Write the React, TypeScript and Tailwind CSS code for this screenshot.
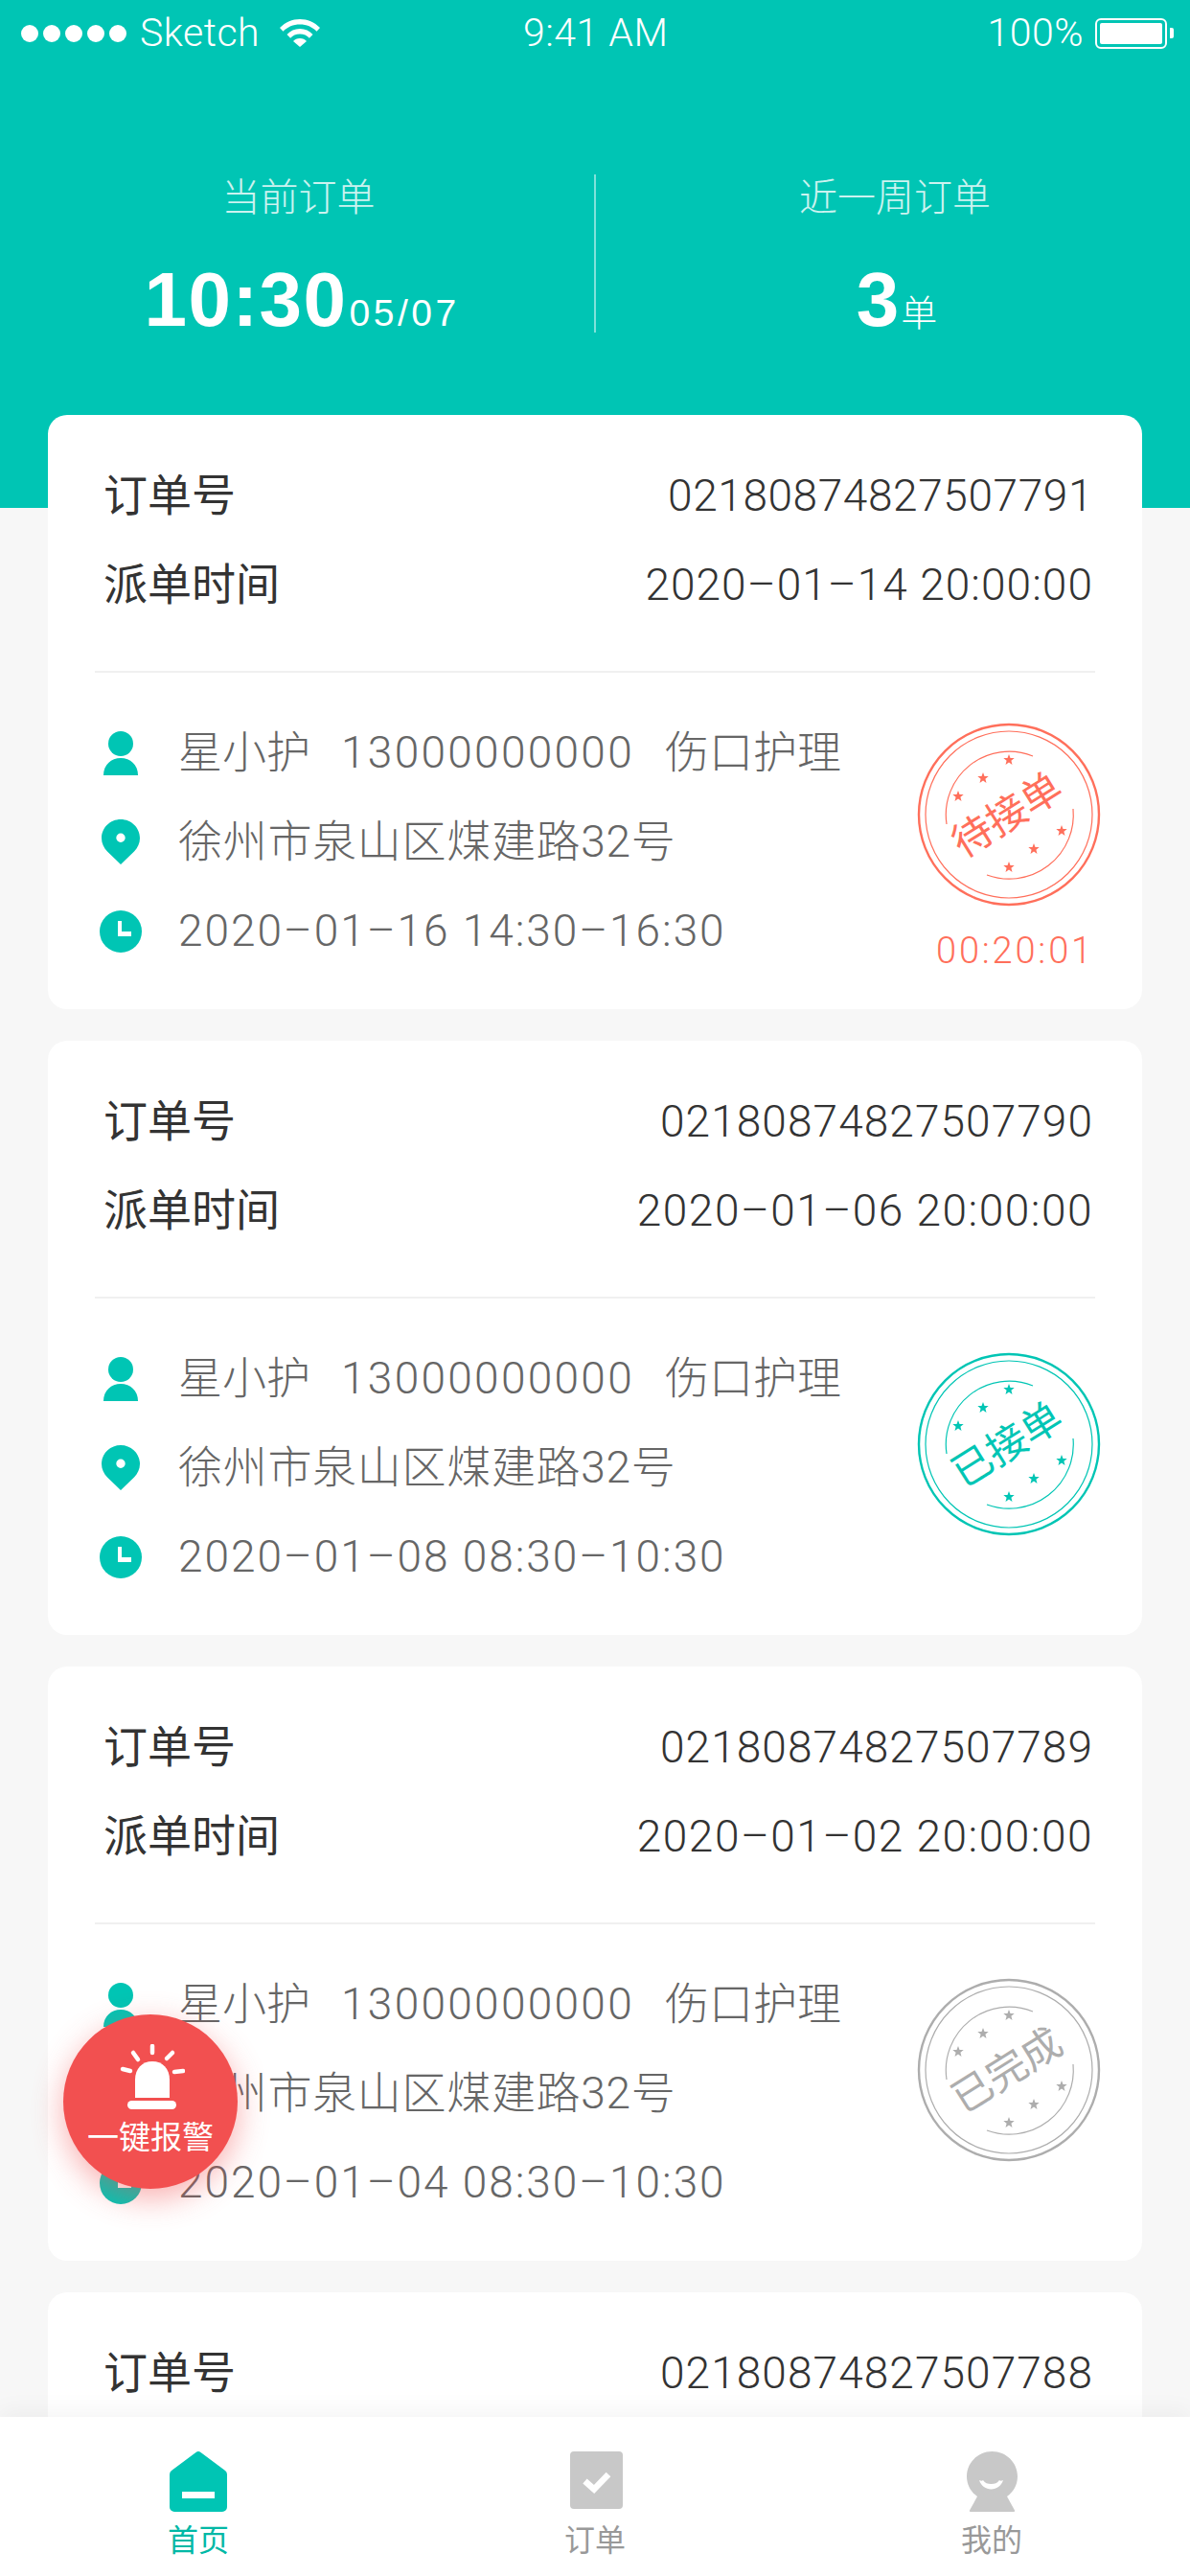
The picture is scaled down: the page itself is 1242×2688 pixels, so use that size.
type Stamp = "pending" | "accepted" | "done";

type Order = {
  no: string;
  sent?: string;
  slot?: string;
  stamp?: Stamp;
  timer?: string;
};

const orders: Order[] = [
  { no: "021808748275 07791", sent: "2020–01–14 20:00:00", slot: "2020–01–16 14:30–16:30", stamp: "pending", timer: "00:20:01" },
  { no: "021808748275 07790", sent: "2020–01–06 20:00:00", slot: "2020–01–08 08:30–10:30", stamp: "accepted" },
  { no: "021808748275 07789", sent: "2020–01–02 20:00:00", slot: "2020–01–04 08:30–10:30", stamp: "done" },
  { no: "021808748275 07788" },
].map((o) => ({ ...o, no: o.no.replace(" ", "") })) as Order[];

const stamps = {
  pending: { color: "#FF6F5B", label: "待接单" },
  accepted: { color: "#00C5B4", label: "已接单" },
  done: { color: "#ADADAD", label: "已完成" },
};

const starPoints = "0,-6 1.500,-1.900 5.700,-1.900 2.400,0.700 3.500,4.900 0,2.400 -3.500,4.900 -2.400,0.700 -5.700,-1.900 -1.500,-1.900";
const starSpots = [
  [0, -57],
  [-27, -38],
  [-53, -19],
  [55, 17],
  [26, 36],
  [0, 55],
];

function StampMark({ kind }: { kind: Stamp }) {
  const { color, label } = stamps[kind];
  return (
    <svg width="200" height="200" viewBox="-100 -100 200 200" fill="none" stroke={color}>
      <circle r="94" strokeWidth="2.4" />
      <circle r="87" strokeWidth="1.2" />
      <path d="M-65 10A66 66 0 0 1 25-61" strokeWidth="1.2" />
      <path d="M67-6A67 67 0 0 1-23 63" strokeWidth="1.2" />
      {starSpots.map(([x, y]) => (
        <polygon key={`${x}${y}`} points={starPoints} transform={`translate(${x} ${y})`} fill={color} stroke="none" />
      ))}
      <text
        x="0"
        y="0"
        transform="rotate(-32) translate(-2 14)"
        textAnchor="middle"
        fill={color}
        stroke="none"
        fontSize="42"
        fontFamily="'Noto Sans CJK SC', sans-serif"
      >
        {label}
      </text>
    </svg>
  );
}

function PersonIcon() {
  return (
    <svg width="36" height="46" viewBox="0 0 36 46" fill="#00C5B4">
      <circle cx="18" cy="13" r="13" />
      <path d="M0 46C0 35 8 28 18 28s18 7 18 18z" />
    </svg>
  );
}

function PinIcon() {
  return (
    <svg width="40" height="47" viewBox="0 0 40 47" fill="#00C5B4">
      <path
        fillRule="evenodd"
        d="M20 0c11 0 20 8.700 20 19.500 0 5.500-2.300 10-6 14L20 47 6 33.500C2.300 29.500 0 25 0 19.500 0 8.700 9 0 20 0zm0 14.500a4.700 4.700 0 1 0 0 9.400 4.700 4.700 0 0 0 0-9.400z"
      />
    </svg>
  );
}

function ClockIcon() {
  return (
    <svg width="44" height="44" viewBox="0 0 44 44">
      <circle cx="22" cy="22" r="22" fill="#00C5B4" />
      <path d="M19 11h4v11h10v5H19z" fill="#fff" />
    </svg>
  );
}

function OrderCard({ order }: { order: Order }) {
  return (
    <div className="h-[620px] shrink-0 rounded-[20px] bg-white">
      <div className="pl-[58px] pr-[51px] pt-[38px] text-[46px] leading-[93px] text-[#333]">
        <div className="flex justify-between">
          <span>订单号</span>
          <span className={order.timer ? "font-light tracking-[0.6px]" : "font-light tracking-[1.07px]"}>{order.no}</span>
        </div>
        {order.sent && (
          <div className="flex justify-between">
            <span>派单时间</span>
            <span className={order.timer ? "font-light tracking-[1.05px]" : "font-light tracking-[1.5px]"}>{order.sent}</span>
          </div>
        )}
      </div>
      {order.stamp && (
        <>
          <div className="mx-[49px] mt-[43px] h-[2px] bg-[#F0F0F0]" />
          <div className="flex justify-between pl-[54px] pr-[39px]">
            <div className="pt-[37px] text-[46px] font-light leading-[93px] text-[#666]">
              <div className="flex items-center">
                <div className="flex w-[44px] justify-center">
                  <PersonIcon />
                </div>
                <div className="ml-[38px] flex gap-[32px]">
                  <span>星小护</span>
                  <span className="tracking-[2.3px]">13000000000</span>
                  <span>伤口护理</span>
                </div>
              </div>
              <div className="flex items-center">
                <div className="flex w-[44px] justify-center">
                  <PinIcon />
                </div>
                <span className="ml-[38px] tracking-[0.7px]">徐州市泉山区煤建路32号</span>
              </div>
              <div className="flex items-center">
                <ClockIcon />
                <span className="ml-[38px] tracking-[1.95px]">{order.slot}</span>
              </div>
            </div>
            <div className={order.timer ? "mt-[48px] flex flex-col items-center" : "mt-[52px] flex flex-col items-center"}>
              <StampMark kind={order.stamp} />
              {order.timer && (
                <span className="ml-[13px] mt-[20px] text-[38px] font-light leading-[44px] tracking-[2.8px] text-[#FF6F5B]">
                  {order.timer}
                </span>
              )}
            </div>
          </div>
        </>
      )}
    </div>
  );
}

function StatusBar() {
  return (
    <div className="relative flex h-[68px] items-center justify-between pl-[22px] pr-[17px] pt-[1px] text-[41px] font-light tracking-[0.5px] text-white">
      <div className="flex items-center">
        <div className="flex gap-[5px]">
          {[0, 1, 2, 3, 4].map((i) => (
            <div key={i} className="h-[18px] w-[18px] rounded-full bg-white" />
          ))}
        </div>
        <span className="ml-[14px]">Sketch</span>
        <svg className="ml-[21px]" width="42" height="29" viewBox="0 0 42 29" fill="white">
          <path d="M21 0C13 0 6 3 0 9l3.500 3.800C8 8 14 5.500 21 5.500s13 2.500 17.500 7.300L42 9C36 3 29 0 21 0z" />
          <path d="M21 10c-5.500 0-10 2-13.500 6l3.600 3.800C13.500 17 17 15.500 21 15.500s7.500 1.500 9.900 4.300l3.600-3.800C31 12 26.500 10 21 10z" />
          <path d="M21 20c-3 0-5.300 1-7 3l7 6 7-6c-1.700-2-4-3-7-3z" />
        </svg>
      </div>
      <span className="absolute left-[546px]">9:41 AM</span>
      <div className="flex items-center">
        <span>100%</span>
        <div className="ml-[12px] flex h-[32px] w-[75px] rounded-[6px] border-2 border-white p-[3px]">
          <div className="flex-1 rounded-[2px] bg-white" />
        </div>
        <div className="ml-[3px] h-[11px] w-[4px] rounded-r-[2px] bg-white" />
      </div>
    </div>
  );
}

function Header() {
  const num = "font-['Liberation_Sans',sans-serif]";
  return (
    <div className="h-[530px] shrink-0 bg-[#00C5B4]">
      <StatusBar />
      <div className="mt-[114px] grid grid-cols-[620px_2px_620px] grid-rows-[165px]">
        <div className="flex flex-col items-center">
          <span className="ml-[3px] text-[40px] font-light leading-[50px] text-white/80">当前订单</span>
          <div className={`ml-[10px] mt-[41px] flex items-baseline text-white ${num}`}>
            <span className="text-[80px] font-bold leading-[80px] tracking-[1.5px]">10:30</span>
            <span className="ml-[2px] text-[39px] font-light leading-[40px] tracking-[3.500px]">05/07</span>
          </div>
        </div>
        <div className="bg-white/50" />
        <div className="flex flex-col items-center">
          <span className="ml-[4px] text-[40px] font-light leading-[50px] text-white/80">近一周订单</span>
          <div className={`ml-[8px] mt-[41px] flex items-baseline text-white ${num}`}>
            <span className="text-[80px] font-bold leading-[80px]">3</span>
            <span className="ml-[2px] font-['Noto_Sans_CJK_SC',sans-serif] text-[38px] font-light leading-[40px]">单</span>
          </div>
        </div>
      </div>
    </div>
  );
}

function AlarmButton() {
  return (
    <div className="absolute left-[66px] top-[2102px] flex h-[182px] w-[182px] flex-col items-center rounded-full bg-[#F25050] pt-[31px] shadow-[0_10px_32px_rgba(242,80,80,0.45)]">
      <svg className="ml-[3px]" width="68" height="68" viewBox="0 0 68 68" fill="white">
        <path d="M16 56V37C16 25.500 23.500 18 34 18s18 7.500 18 19v19z" />
        <rect x="8" y="59" width="51" height="9" rx="4.500" />
        <g stroke="white" strokeWidth="4.500" strokeLinecap="round">
          <path d="M34 2v7" />
          <path d="M14 9l5 7" />
          <path d="M55 9l-6 6" />
          <path d="M3 26l8 2" />
          <path d="M66 28l-9 1" />
        </g>
      </svg>
      <span className="mt-[10px] text-[33px] leading-[40px] text-white">一键报警</span>
    </div>
  );
}

function TabBar() {
  return (
    <div className="absolute bottom-0 left-0 grid h-[166px] w-full grid-cols-3 bg-white text-[32px] leading-[40px] shadow-[0_-8px_22px_rgba(0,0,0,0.04)]">
      <div className="flex flex-col items-center pt-[36px] text-[#00B8A6]">
        <svg width="60" height="63" viewBox="0 0 60 63" fill="#00C5B4">
          <path
            fillRule="evenodd"
            d="M27.500 1a4 4 0 0 1 5 0L58 20a5 5 0 0 1 2 4v34a5 5 0 0 1-5 5H5a5 5 0 0 1-5-5V24a5 5 0 0 1 2-4zM13 42v7h34v-7z"
          />
        </svg>
        <span className="mt-[10px]">首页</span>
      </div>
      <div className="flex flex-col items-center pt-[36px] text-[#999]">
        <svg className="ml-[2px]" width="55" height="60" viewBox="0 0 55 60">
          <rect width="55" height="60" rx="4" fill="#C8C8C8" />
          <path d="M15.500 31l9.500 8.500L40 24" fill="none" stroke="white" strokeWidth="6.500" />
        </svg>
        <span className="mt-[13px]">订单</span>
      </div>
      <div className="flex flex-col items-center pt-[36px] text-[#999]">
        <svg width="53" height="63" viewBox="0 0 53 63">
          <path
            d="M26.500 0C41 0 53 11.500 53 26c0 9-4.500 16.500-11 21l8 14.500a1 1 0 0 1-1 1.500H4a1 1 0 0 1-1-1.500L11 47C4.500 42.500 0 35 0 26 0 11.500 12 0 26.500 0z"
            fill="#C8C8C8"
          />
          <path d="M13 30c2 1 3 1 4 0 2 3 5 4 8.500 4s6.500-1 8.500-4c1 1 2 1 4 0-2 6-7 9.500-12.500 9.500S15 36 13 30z" fill="white" />
        </svg>
        <span className="mt-[10px]">我的</span>
      </div>
    </div>
  );
}

export default function App() {
  return (
    <div className="relative h-[2688px] w-[1242px] overflow-hidden bg-[#F7F7F7] font-['Roboto','Noto_Sans_CJK_SC',sans-serif]">
      <Header />
      <div className="-mt-[97px] flex flex-col gap-[33px] px-[50px]">
        {orders.map((order) => (
          <OrderCard key={order.no} order={order} />
        ))}
      </div>
      <AlarmButton />
      <TabBar />
    </div>
  );
}
